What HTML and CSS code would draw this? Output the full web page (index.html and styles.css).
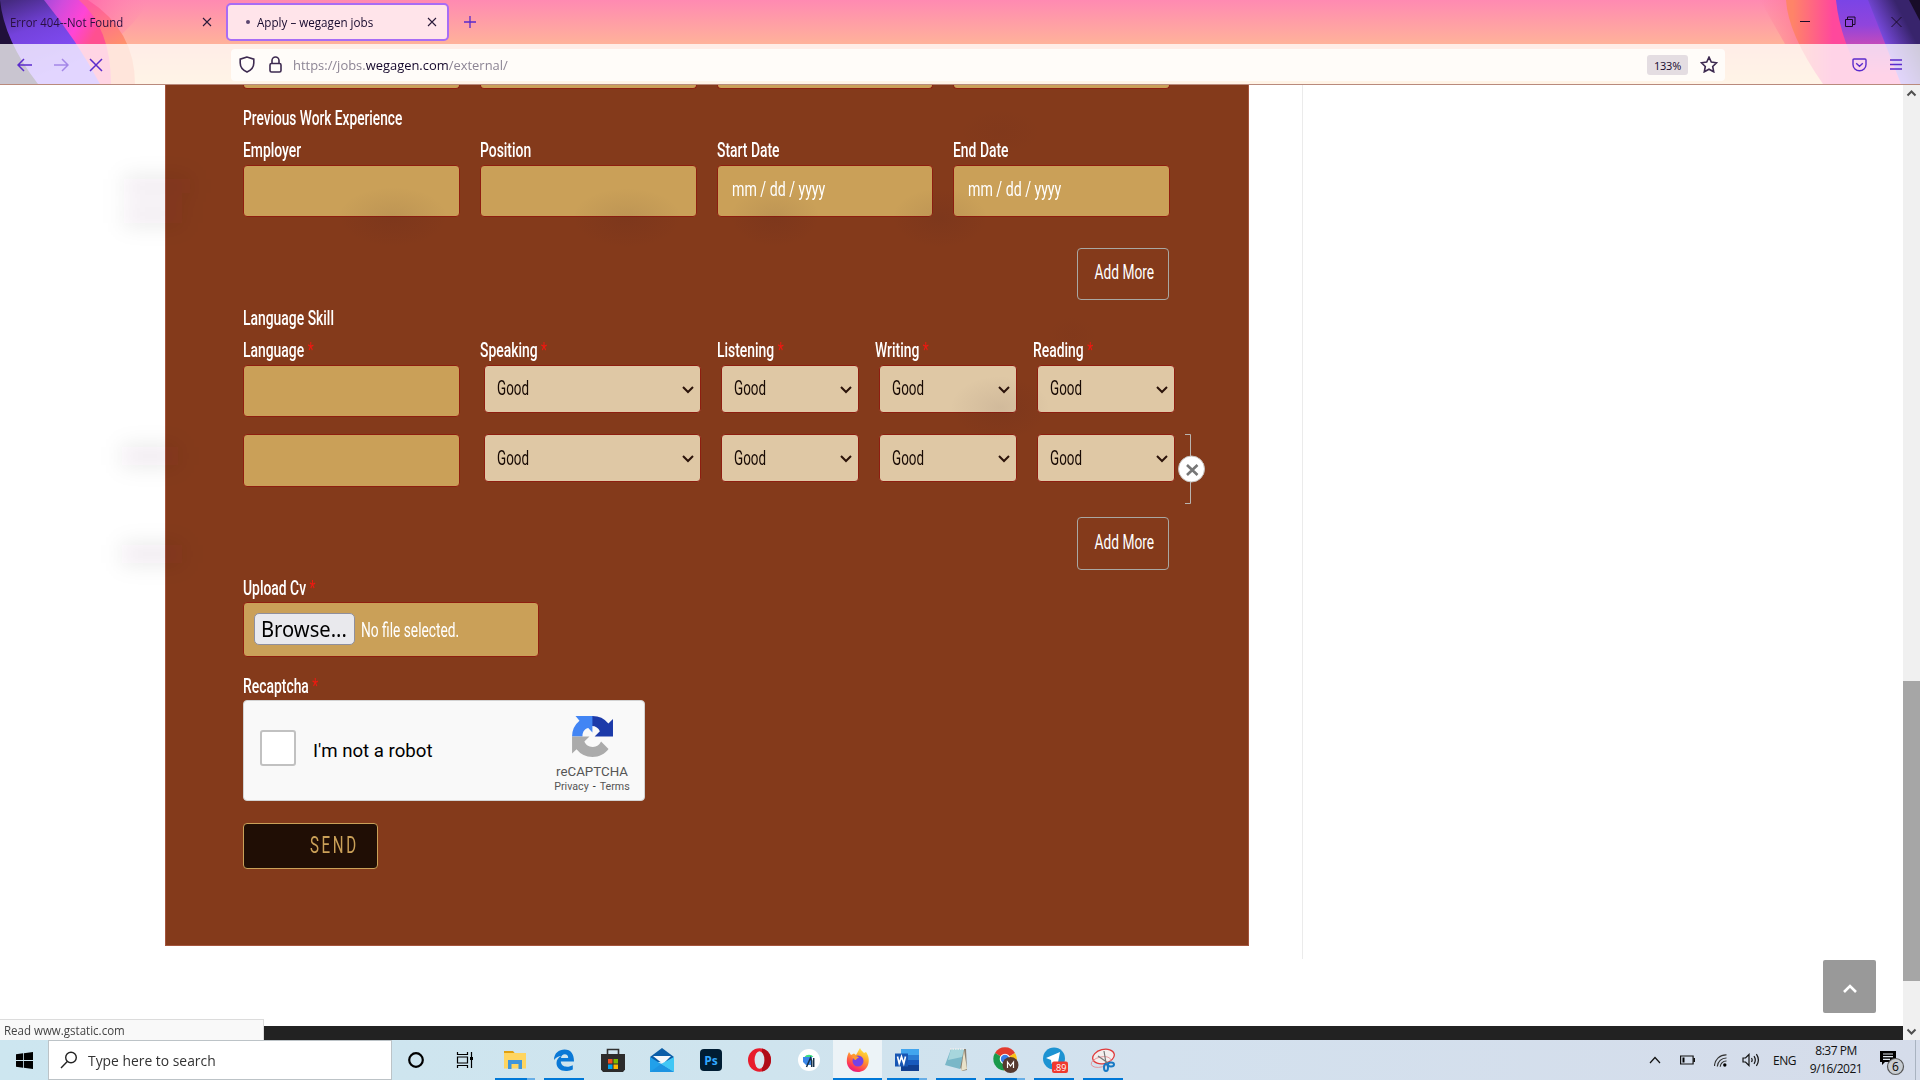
FILE: index.html
```html
<!DOCTYPE html>
<html lang="en">
<head>
<meta charset="utf-8">
<title>Apply – wegagen jobs</title>
<link rel="stylesheet" href="styles.css">
</head>
<body>
<div class="screen">
  <header class="browser">
    <svg class="theme" width="1920" height="84" viewBox="0 0 1920 84">
      <defs>
        <linearGradient id="sky" x1="0" y1="0" x2="0" y2="1"><stop offset="0" stop-color="#ff8ab2"/><stop offset=".5" stop-color="#ffb09b"/><stop offset="1" stop-color="#ffd29a"/></linearGradient>
        <linearGradient id="glowL" x1="0" x2="1"><stop offset=".55" stop-color="#ff62a8" stop-opacity=".8"/><stop offset="1" stop-color="#ff8ab2" stop-opacity="0"/></linearGradient>
        <linearGradient id="glowR" x1="0" x2="1"><stop offset="0" stop-color="#ff7a98" stop-opacity="0"/><stop offset="1" stop-color="#ff7a98" stop-opacity=".8"/></linearGradient>
        <linearGradient id="orL" x1=".5" x2="1" y1="0" y2=".6"><stop offset=".2" stop-color="#ff5c9e"/><stop offset=".9" stop-color="#ff9468"/></linearGradient>
        <linearGradient id="magL" x1=".2" x2=".9" y1="0" y2=".3"><stop offset="0" stop-color="#7a46d8"/><stop offset=".45" stop-color="#d04bdc"/><stop offset=".75" stop-color="#ff45d6"/><stop offset="1" stop-color="#ff5090"/></linearGradient>
        <linearGradient id="purL" x1=".1" x2=".5" y1="0" y2=".9"><stop offset="0" stop-color="#452a80"/><stop offset=".4" stop-color="#7442dc"/><stop offset="1" stop-color="#8650ff"/></linearGradient>
        <linearGradient id="orR" x1="0" x2="1"><stop offset=".05" stop-color="#ff8468"/><stop offset=".35" stop-color="#ff489c"/></linearGradient>
        <linearGradient id="purR" x1="0" x2="0" y1="0" y2="1"><stop offset="0" stop-color="#7a44e6"/><stop offset=".3" stop-color="#9045dc"/><stop offset=".55" stop-color="#c84ab8"/><stop offset=".9" stop-color="#ff4aa0"/></linearGradient>
        <linearGradient id="vioR" x1=".1" x2=".7" y1=".6" y2=".1"><stop offset=".15" stop-color="#8853fa"/><stop offset=".9" stop-color="#38246c"/></linearGradient>
      </defs>
      <rect width="1920" height="84" fill="url(#sky)"/>
      <path d="M0 0H150Q135 25 110 44H0Z" fill="url(#glowL)"/>
      <path d="M1760 0H1800V44H1785Z" fill="url(#glowR)"/>
      <path d="M0 0H88Q135 30 135 84H0Z" fill="url(#orL)"/>
      <path d="M0 0H79Q111 28 111 84H0Z" fill="url(#magL)"/>
      <path d="M0 0H44Q78 42 100 84H0Z" fill="url(#purL)"/>
      <path d="M0 0Q4 40 38 84H0Z" fill="#20103a"/>
      <path d="M1786 0Q1788 34 1823 84H1920V0Z" fill="url(#orR)"/>
      <path d="M1836 0Q1840 40 1865 84H1920V0Z" fill="url(#purR)"/>
      <path d="M1868 0L1901 84H1920V0Z" fill="url(#vioR)"/>
      <path d="M1909 0L1920 21V0Z" fill="#180c28"/>
    </svg>
    <div class="tabstrip">
      <div class="tab"><span class="tab-text t1">Error 404--Not Found</span>
        <svg class="x" width="10" height="10" viewBox="0 0 10 10"><path d="M1 1l8 8M9 1l-8 8"/></svg></div>
      <div class="tab active"><i class="dot"></i><span class="tab-text t2">Apply – wegagen jobs</span>
        <svg class="x" width="10" height="10" viewBox="0 0 10 10"><path d="M1 1l8 8M9 1l-8 8"/></svg></div>
      <svg class="plus" width="12" height="12" viewBox="0 0 12 12"><path d="M6 0v12M0 6h12"/></svg>
      <div class="winctl">
        <svg width="10" height="12" viewBox="0 0 10 12"><path d="M0 5.500h10"/></svg>
        <svg width="11" height="12" viewBox="0 0 11 12"><path d="M.5 3.500h7v7h-7zM2.500 3.500v-2.500h7.500v7.500h-2.500"/></svg>
        <svg width="11" height="12" viewBox="0 0 11 12"><path d="M.5 1l10 10M10.500 1l-10 10"/></svg>
      </div>
    </div>
    <div class="toolbar">
      <div class="nav">
        <svg width="16" height="14" viewBox="0 0 16 14"><path d="M15 7H1M7 1L1 7l6 6"/></svg>
        <svg class="dim" width="16" height="14" viewBox="0 0 16 14"><path d="M1 7h14M9 1l6 6-6 6"/></svg>
        <svg width="14" height="14" viewBox="0 0 14 14"><path d="M1 1l12 12M13 1L1 13"/></svg>
      </div>
      <div class="urlbar">
        <svg width="16" height="17" viewBox="0 0 16 17"><path d="M8 1L1.200 3.200V7c0 4 2.300 7 6.800 9 4.500-2 6.800-5 6.800-9V3.200z"/></svg>
        <svg width="13" height="17" viewBox="0 0 13 17"><rect x="1" y="7.500" width="11" height="8.500" rx="1.500"/><path d="M3 7.500V4.500a3.500 3.500 0 0 1 7 0v3"/></svg>
        <span class="url">https://jobs.<b>wegagen.com</b>/external/</span>
        <span class="zoom">133%</span>
        <svg class="star" width="18" height="17" viewBox="0 0 18 17"><path d="M9 1.200l2.300 4.900 5.300.700-3.900 3.700 1 5.300L9 13.200l-4.700 2.600 1-5.300L1.400 6.800l5.300-.7z"/></svg>
      </div>
      <div class="menu">
        <svg width="15" height="14" viewBox="0 0 15 14"><path d="M2 1h11q1 0 1 1v4.500a6.500 6.300 0 0 1-13 0V2q0-1 1-1zM4.200 5.200l3.300 3 3.300-3"/></svg>
        <svg width="12" height="12" viewBox="0 0 12 12"><path d="M0 1h12M0 5.500h12M0 10h12"/></svg>
      </div>
    </div>
  </header>

  <main class="page">
    <div class="article">
      <form class="form">
        <div class="row remnants"><i></i><i></i><i></i><i></i></div>

        <div class="title"><span class="cond long">Previous Work Experience</span></div>
        <div class="row">
          <div class="col"><label><span class="cond">Employer</span></label><div class="field"></div></div>
          <div class="col"><label><span class="cond">Position</span></label><div class="field"></div></div>
          <div class="col"><label><span class="cond">Start Date</span></label><div class="field"><span class="date">mm / dd / yyyy</span></div></div>
          <div class="col"><label><span class="cond">End Date</span></label><div class="field"><span class="date">mm / dd / yyyy</span></div></div>
        </div>
        <div class="addmore"><span>Add More</span></div>

        <div class="title"><span class="cond">Language Skill</span></div>
        <div class="row lang">
          <div class="col"><label><span class="cond">Language <em>*</em></span></label><div class="field"></div></div>
          <div class="col"><label><span class="cond">Speaking <em>*</em></span></label><div class="select"><span>Good</span><svg width="12" height="8" viewBox="0 0 12 8"><path d="M1 1l5 5 5-5"/></svg></div></div>
          <div class="col"><label><span class="cond">Listening <em>*</em></span></label><div class="select"><span>Good</span><svg width="12" height="8" viewBox="0 0 12 8"><path d="M1 1l5 5 5-5"/></svg></div></div>
          <div class="col"><label><span class="cond">Writing <em>*</em></span></label><div class="select"><span>Good</span><svg width="12" height="8" viewBox="0 0 12 8"><path d="M1 1l5 5 5-5"/></svg></div></div>
          <div class="col"><label><span class="cond">Reading <em>*</em></span></label><div class="select"><span>Good</span><svg width="12" height="8" viewBox="0 0 12 8"><path d="M1 1l5 5 5-5"/></svg></div></div>
        </div>
        <div class="row lang second">
          <div class="col"><div class="field"></div></div>
          <div class="col"><div class="select"><span>Good</span><svg width="12" height="8" viewBox="0 0 12 8"><path d="M1 1l5 5 5-5"/></svg></div></div>
          <div class="col"><div class="select"><span>Good</span><svg width="12" height="8" viewBox="0 0 12 8"><path d="M1 1l5 5 5-5"/></svg></div></div>
          <div class="col"><div class="select"><span>Good</span><svg width="12" height="8" viewBox="0 0 12 8"><path d="M1 1l5 5 5-5"/></svg></div></div>
          <div class="col"><div class="select"><span>Good</span><svg width="12" height="8" viewBox="0 0 12 8"><path d="M1 1l5 5 5-5"/></svg></div></div>
          <svg class="remove" width="28" height="72" viewBox="0 0 28 72"><path d="M7 1.500h5.500v69H7" fill="none" stroke="#b9b4b0"/><circle cx="13.500" cy="36" r="13" fill="#fff" stroke="#c4bfbb"/><path d="M9 32l10.500 10M19.500 32L9 42" stroke="#777" stroke-width="2.600"/></svg>
        </div>
        <div class="addmore lower"><span>Add More</span></div>

        <label class="single"><span class="cond">Upload Cv <em>*</em></span></label>
        <div class="upload"><span class="browse"><span>Browse...</span></span><span class="nofile">No file selected.</span></div>

        <label class="single cap"><span class="cond">Recaptcha <em>*</em></span></label>
        <div class="captcha">
          <i class="check"></i>
          <span class="robot">I'm not a robot</span>
          <div class="brand">
            <svg width="41" height="41" viewBox="0 0 64 64">
              <path fill="#1c3aa9" d="M64 31.950l-.020-1.370V4.600l-7.180 7.180A31.900 31.900 0 0 0 32.100.100 31.900 31.900 0 0 0 31 .120v15.300c6 0 10.400 3 12.500 8.300l-8.200 8.230z"/>
              <path fill="#4285f4" d="M31.860.070H5.500l6.200 7.200A31.900 31.900 0 0 0 .070 31.900h16.300c-.200-7.800 4.500-12.300 9-13l6.500 7z"/>
              <path fill="#ababab" d="M.100 32v26.500l7-6.600A31.900 31.900 0 0 0 32 64c10.500 0 19.500-4.800 25-12.500L45.400 39.800a15 15 0 0 1-12.700 8.400c-7 .100-11-3.200-13.400-8.400l8-7.800z"/>
            </svg>
            <span class="re">reCAPTCHA</span>
            <span class="pt">Privacy<b>-</b>Terms</span>
          </div>
        </div>
        <div class="send"><span>SEND</span></div>
        <svg class="smudges" width="1200" height="560" viewBox="90 85 1200 560">
          <defs>
            <radialGradient id="sm"><stop offset="0" stop-color="#301828" stop-opacity=".08"/><stop offset=".5" stop-color="#301828" stop-opacity=".04"/><stop offset="1" stop-color="#301828" stop-opacity="0"/></radialGradient>
            <filter id="soft" x="-50%" y="-80%" width="200%" height="260%"><feGaussianBlur stdDeviation="11"/></filter>
          </defs>
          <g fill="#301828" fill-opacity=".09" filter="url(#soft)">
            <rect x="124" y="177" width="66" height="18"/><rect x="124" y="207" width="58" height="18"/>
            <rect x="122" y="446" width="56" height="20"/><rect x="122" y="544" width="60" height="20"/>
          </g>
          <g fill="url(#sm)">
            <ellipse cx="393" cy="217" rx="55" ry="30"/><ellipse cx="627" cy="218" rx="55" ry="30"/>
            <ellipse cx="775" cy="217" rx="45" ry="30"/><ellipse cx="940" cy="218" rx="48" ry="30"/>
            <ellipse cx="1000" cy="132" rx="42" ry="24" opacity=".4"/><ellipse cx="1000" cy="408" rx="50" ry="32"/>
            <ellipse cx="1072" cy="335" rx="26" ry="20" opacity=".3"/>
          </g>
        </svg>
      </form>
    </div>
    <div class="side"></div>
    <div class="scrollbar">
      <svg width="17" height="17" viewBox="0 0 17 17"><path d="M4.500 10.500L8.500 6.500l4 4"/></svg>
      <i></i>
      <svg width="17" height="17" viewBox="0 0 17 17"><path d="M4.500 6.500l4 4 4-4"/></svg>
    </div>
    <div class="totop"><svg width="16" height="10" viewBox="0 0 16 10"><path d="M2 8l6-6 6 6"/></svg></div>
    <div class="status"><span>Read www.gstatic.com</span></div>
  </main>

  <footer class="taskbar">
    <div class="start"><svg width="17" height="17" viewBox="0 0 17 17"><path d="M0 2.300L7 1.300v6.800H0zM7.800 1.200L17 0v8H7.800zM0 8.900h7v6.800l-7-1zM7.800 8.900H17V17l-9.200-1.300z"/></svg></div>
    <div class="search"><svg width="18" height="18" viewBox="0 0 18 18"><circle cx="11" cy="6.500" r="5.300"/><path d="M7.300 10.500L1 17"/></svg><span>Type here to search</span></div>
    <div class="apps">
      <div class="app"><svg width="18" height="18" viewBox="0 0 18 18"><circle cx="9" cy="9" r="6.800" fill="none" stroke="#000" stroke-width="2.200"/></svg></div>
      <div class="app"><svg width="18" height="18" viewBox="0 0 18 18" fill="none" stroke="#000" stroke-width="1.200"><path d="M1.500 1v2.500h10V1M1.500 17v-2.500h10V17M1.500 6h10v6h-10zM15.500 1v16"/><path d="M14 6h3v3h-3z" fill="#000" stroke="none"/></svg></div>
      <div class="app open stack"><svg width="22" height="20" viewBox="0 0 22 20"><path d="M0 1h9l2 2.500H0z" fill="#e0a010"/><path d="M0 3h22v15.500H0z" fill="#ffd560"/><path d="M4 19v-9h14v9h-3.500v-5h-7v5z" fill="#3f95dc"/></svg></div>
      <div class="app open"><svg width="22" height="22" viewBox="0 0 22 22"><path d="M1 11C1 4 6 .500 11.500.500 18 .500 21 5 21 12.500H7.800c.2 3.500 3 5.200 6.200 5.200 2.300 0 4.200-.6 5.800-1.500v4.300A14 14 0 0 1 13 22C7 22 3.500 18.500 3.500 14c0-3 1.700-5.600 4.700-7C6 7 3 8.200 1 11zM8 9h7.200c0-2.400-1.300-3.700-3.400-3.700S8.300 6.600 8 9z" fill="#0a78d6"/></svg></div>
      <div class="app"><svg width="24" height="24" viewBox="0 0 24 24"><path d="M6.500 7V1.500h11V7" fill="none" stroke="#303030" stroke-width="1.600"/><path d="M0 6h24v15.500l-2 2.500H2l-2-2.500z" fill="#2c2c2c"/><path d="M7 11h4.500v4.500H7z" fill="#f25022"/><path d="M12.500 11H17v4.500h-4.500z" fill="#7fba00"/><path d="M7 16.500h4.500V21H7z" fill="#00a4ef"/><path d="M12.500 16.500H17V21h-4.500z" fill="#ffb900"/></svg></div>
      <div class="app"><svg width="24" height="24" viewBox="0 0 24 24"><path d="M0 9L12 0l12 9-5 5H5z" fill="#0b5ea8"/><path d="M3 8h18l-8 8z" fill="#f4f8fb"/><path d="M0 9l24 15H0z" fill="#21a0ea"/><path d="M24 9v15L11 16z" fill="#41c7f5"/><path d="M0 24l11-8 13 8z" fill="#1d94e2"/></svg></div>
      <div class="app"><svg width="22" height="22" viewBox="0 0 22 22"><rect width="22" height="22" rx="4" fill="#001d33"/><text x="11" y="15.500" text-anchor="middle" class="ps">Ps</text></svg></div>
      <div class="app"><svg width="23" height="24" viewBox="0 0 23 24"><ellipse cx="11.500" cy="12" rx="11.500" ry="11.700" fill="#e81c2c"/><path d="M14 .5c12 2 12 21 0 23z" fill="#b00d18"/><ellipse cx="11.500" cy="12" rx="4.900" ry="8.800" fill="#d6e7ef"/></svg></div>
      <div class="app"><svg width="22" height="22" viewBox="0 0 22 22"><circle cx="11" cy="11" r="11" fill="#fff"/><path d="M6.500 8a5 4 0 0 1 9 0z" fill="#3ddc84"/><path d="M5 8h9v8H8L5 13z" fill="#3a86e8"/><path d="M8.500 18l4-9 1.200 3v6M15.700 9v9" fill="none" stroke="#15304a" stroke-width="1.500"/></svg></div>
      <div class="app open current"><svg width="24" height="24" viewBox="0 0 24 24"><defs><linearGradient id="ff" x1=".8" y1="0" x2=".3" y2="1"><stop offset="0" stop-color="#fff044"/><stop offset=".4" stop-color="#ffa22c"/><stop offset=".8" stop-color="#ff3a55"/><stop offset="1" stop-color="#e31587"/></linearGradient></defs><path d="M3 4l2 3 3-1.500L10 7l4-7c1 3 3 3.500 4 5l2-1c3 4 3.500 9 2 13-2 5-6 7-10 7C5 24 .8 19 .8 13 .8 9 2 6 3 4z" fill="url(#ff)"/><circle cx="12" cy="13" r="5.500" fill="#7542e5"/><path d="M6 9c3-2 6-1 7 1-3 0-2 2-4 2z" fill="#ff9a30"/></svg></div>
      <div class="app open stack"><svg width="24" height="24" viewBox="0 0 24 24"><path d="M6 1h18v6H6z" fill="#41a5ee"/><path d="M6 7h18v5H6z" fill="#2b7cd3"/><path d="M6 12h18v5H6z" fill="#185abd"/><path d="M6 17h18v6H6z" fill="#103f91"/><path d="M0 5.500h13v13H0z" fill="#1756b4"/><path d="M2.500 8.500l1.700 7 2.300-7 2.300 7 1.700-7" fill="none" stroke="#fff" stroke-width="1.600"/></svg></div>
      <div class="app open"><svg width="24" height="24" viewBox="0 0 24 24"><path d="M6 1h16l1 21-5 1z" fill="#8b8171"/><path d="M7 1h13l-4 20-15-4z" fill="#79b7c8"/><path d="M7 1h13l-2 8L4 12z" fill="#a7d6dd"/><path d="M20 2l3 19-6 2z" fill="#e9e2c9"/><path d="M6 1h15" stroke="#eee" stroke-width="1.500" stroke-dasharray="1.500 1"/></svg></div>
      <div class="app open stack shift"><svg width="26" height="26" viewBox="0 0 26 26"><path d="M12 12L2 6A11.500 11.500 0 0 1 22 6z" fill="#e33b2e"/><path d="M12 12L2 6a11.500 11.500 0 0 0 9 17.500z" fill="#1a9a4b"/><path d="M12 12l10-6a11.500 11.500 0 0 1-11 17.500z" fill="#fbc116"/><circle cx="12" cy="12" r="5.300" fill="#fff"/><circle cx="12" cy="12" r="4.200" fill="#3b7de9"/><circle cx="17.500" cy="18" r="8" fill="#56392f"/><path d="M14.500 21v-6l3 4 3-4v6" fill="none" stroke="#fff" stroke-width="1.200"/></svg></div>
      <div class="app open shift"><svg width="26" height="26" viewBox="0 0 26 26"><circle cx="12" cy="11.500" r="11" fill="#1d93d2"/><path d="M4 11l14-6-2.500 13-4-3-2 2-.5-4z" fill="#fff"/><rect x="10" y="14.500" width="16" height="11.500" rx="2" fill="#f0392e"/><text x="18" y="24" text-anchor="middle" class="count">.89</text></svg></div>
      <div class="app open"><svg width="26" height="24" viewBox="0 0 26 24"><ellipse cx="13.500" cy="8.500" rx="11" ry="7" transform="rotate(-14 13.500 8.500)" fill="#f3eeee" stroke="#e03a3a" stroke-width="1.300"/><ellipse cx="11" cy="14" rx="10" ry="5" transform="rotate(-14 11 14)" fill="none" stroke="#e58a90" stroke-width=".8"/><path d="M14 3l2 12M8 8l10 7" stroke="#777" stroke-width="1.200"/><ellipse cx="16" cy="19.500" rx="2" ry="3.500" fill="none" stroke="#1779c4" stroke-width="2"/><ellipse cx="21" cy="16.500" rx="3" ry="2" fill="none" stroke="#1779c4" stroke-width="2"/></svg></div>
    </div>
    <div class="tray">
      <svg width="12" height="8" viewBox="0 0 12 8"><path d="M1 7l5-5.500L11 7"/></svg>
      <svg width="15" height="10" viewBox="0 0 15 10"><path d="M.6 1h12.500v8H.6zM14.400 3v4"/><path d="M2.500 2.500h2v5h-2z" fill="#000" stroke="none"/></svg>
      <svg width="13" height="13" viewBox="0 0 13 13"><path d="M.5 12A11.500 11.500 0 0 1 12.500.8M3.300 12.500A9 9 0 0 1 12.500 4M6.200 12.800A6 6 0 0 1 12.500 7" stroke="#333"/><circle cx="10.800" cy="11" r="1.700" fill="#000" stroke="none"/></svg>
      <svg width="18" height="14" viewBox="0 0 18 14"><path d="M1 5h2.500L7 1.500v11L3.500 9H1zM9.500 5q1.300 2 0 4M12 3.200q2.600 3.800 0 7.600M14.400 1.200q4 5.800 0 11.600"/></svg>
      <span class="lang-id">ENG</span>
      <div class="clock"><span>8:37 PM</span><span>9/16/2021</span></div>
      <svg class="note" width="26" height="26" viewBox="0 0 26 26"><path d="M1 1h16v11H6l-3 3v-3H1z" fill="#000" stroke="none"/><path d="M4 4h10M4 6.700h10M4 9.400h7" stroke="#dfe6ee"/><circle cx="16.500" cy="16.500" r="8" fill="#c8cdd2" stroke="#555"/><text x="16.500" y="21" text-anchor="middle">6</text></svg>
      <i class="peek"></i>
    </div>
  </footer>
</div>
</body>
</html>
```
FILE: styles.css
```css
* { box-sizing: border-box; }
body { margin: 0; background: #fff; font-family: "Open Sans", "Noto Sans", sans-serif; }
svg { display: block; flex: none; }
i, em { font-style: normal; }
.screen { width: 1920px; height: 1080px; display: flex; flex-direction: column; overflow: hidden; }

/* browser chrome */
.browser { position: relative; height: 85px; border-bottom: 1px solid #b98a7c; }
.theme { position: absolute; left: 0; top: 0; }
.tabstrip { position: relative; height: 44px; display: flex; align-items: center; }
.tab { width: 221px; height: 38px; display: flex; align-items: center; justify-content: space-between; padding: 0 9px 0 10px; font-size: 12px; color: #2a1040; }
.tab-text { white-space: nowrap; transform-origin: left; }
.t1 { transform: scaleX(.95); }
.t2 { transform: scaleX(.97); }
.tab.active { margin-left: 5px; width: 223px; border: 2px solid #a86cf5; border-radius: 5px; background: #ffe4ea; padding: 0 10px 0 18px; color: #15082c; }
.dot { width: 4px; height: 4px; border-radius: 50%; background: #5b4670; margin-right: 7px; }
.tab.active .tab-text { flex: 1; }
.x { fill: none; stroke: #2a1a3a; stroke-width: 1.1; }
.plus { margin-left: 15px; fill: none; stroke: #592acb; stroke-width: 1.3; }
.winctl { margin-left: auto; margin-right: 18px; display: flex; gap: 35px; fill: none; stroke: #1a0a28; }
.toolbar { position: relative; height: 40px; display: flex; align-items: center; background: rgba(255,255,255,.76); padding-top: 1px; }
.nav { width: 231px; display: flex; gap: 20px; padding-left: 17px; fill: none; stroke: #5b2bcc; stroke-width: 1.5; }
.nav .dim { opacity: .45; }
.urlbar { width: 1494px; height: 32px; display: flex; align-items: center; padding: 0 7px 0 8px; background: #fffcf9; border-radius: 4px; fill: none; stroke: #3d2a50; stroke-width: 1.6; }
.urlbar svg + svg { margin-left: 14px; }
.url { margin-left: 11px; font-size: 13px; color: #8c8494; white-space: nowrap; transform-origin: left; transform: scaleX(.995); }
.url b { font-weight: 400; color: #15082c; }
.zoom { margin-left: auto; width: 41px; height: 20px; border-radius: 3px; background: #e4dde2; font-size: 11px; line-height: 21px; text-align: center; color: #15082c; letter-spacing: -.2px; }
.urlbar .star { margin-left: 12px; }
.menu { margin-left: auto; display: flex; align-items: center; gap: 23px; margin-right: 18px; fill: none; stroke: #5b2bcc; stroke-width: 1.4; }

/* page */
.page { position: relative; height: 955px; display: flex; background: linear-gradient(#fff 941px, #222 941px); }
.article { width: 1303px; height: 874px; border-right: 1px solid #ebebeb; padding-left: 165px; }
.form { position: relative; width: 1084px; height: 861px; padding: 0 78px 0 77px; background: #843a1b; border: solid #a4543c; border-width: 0 1px 1px; font-family: Roboto, "Liberation Sans", sans-serif; font-size: 21px; color: #fff; }
.row { display: flex; gap: 20px; }
.remnants { height: 4px; }
.remnants i { width: 217px; height: 4px; background: #caa058; border: 1px solid #8e1e10; border-top: 0; border-radius: 0 0 4px 4px; }
.title { margin-top: 13px; height: 32px; line-height: 32px; }
.cond { display: inline-block; white-space: nowrap; font-weight: 500; transform: scaleX(.662); transform-origin: left; }
.long { transform: scaleX(.652); }
label { display: block; height: 31px; line-height: 32px; width: 0; }
em { color: #f01810; font-weight: 400; }
.col { width: 217px; }
.field { height: 52px; background: #caa058; border: 1px solid #8e1e10; border-radius: 4px; padding-left: 14px; line-height: 47px; }
.date { display: inline-block; white-space: nowrap; transform: scaleX(.69); transform-origin: left; font-size: 20.500px; }
.addmore { margin: 31px 0 0 834px; width: 92px; height: 52px; border: 1px solid #a9a7a3; border-radius: 4px; line-height: 47px; font-size: 21px; }
.addmore span { display: block; width: 90px; padding-left: 16px; white-space: nowrap; }
.addmore span, .select span, .nofile, .send span { transform-origin: left; }
.addmore span { transform: translateX(6px) scaleX(.655); }
.addmore + .title { margin-top: 2px; }
.lang { gap: 21px; }
.lang .col:first-child { margin-right: -1px; }
.lang .col:nth-child(2) { width: 216px; }
.lang .col:nth-child(n+3) { width: 137px; }
.select { margin-left: 4px; height: 48px; background: #dfc8a5; border: 1px solid #8e1e10; border-radius: 4px; display: flex; align-items: center; justify-content: space-between; padding: 0 6px 0 12px; color: #180a04; width: 217px; }
.lang .col:nth-child(n+3) .select { width: 138px; }
.select span { transform: scaleX(.64); line-height: 44px; height: 46px; }
.select svg { fill: none; stroke: #2b130a; stroke-width: 2; margin-top: 2px; }
.second { position: relative; margin-top: 17px; height: 52px; }
.second .field { height: 53px; }
.second .select span { line-height: 46px; }
.remove { position: absolute; left: 935px; top: -1px; }
.lower { height: 53px; line-height: 49px; }
.single { margin-top: 3px; height: 29px; line-height: 31px; }
.upload { width: 296px; height: 55px; background: #caa058; border: 1px solid #8e1e10; border-radius: 4px; display: flex; align-items: center; padding-left: 10px; }
.browse { width: 101px; height: 32px; margin-top: -1px; border: 1px solid #8f8f9d; border-radius: 5px; background: #e9e9ed; color: #000; font: 21px/31px "Noto Sans", sans-serif; padding-left: 6px; }
.browse span { display: inline-block; transform: scaleX(.96); transform-origin: left; }
.nofile { margin-left: 6px; white-space: nowrap; transform: scaleX(.655); }
.cap { margin-top: 14px; }
.captcha { width: 402px; height: 101px; background: #f9f9f9; border: 1px solid #d3d3d3; border-radius: 4px; display: flex; align-items: center; padding: 0 14px 0 16px; }
.check { width: 36px; height: 36px; margin-top: -5px; border: 2px solid #c1c1c1; border-radius: 3px; background: #fff; }
.robot { margin-left: 17px; color: #000; font-size: 18.670px; }
.brand { margin-left: auto; display: flex; flex-direction: column; align-items: center; width: 76px; color: #555; height: 84px; padding-top: 7px; }
.re { font-size: 13.300px; line-height: 15px; margin-top: 7px; }
.pt { font-size: 10.700px; line-height: 15px; }
.pt b { font-weight: 400; margin: 0 4px; color: #222; }
.send { margin-top: 22px; width: 135px; height: 46px; border: 1px solid #caa058; border-radius: 4px; background: #200e05; color: #caa058; padding-left: 66px; font-size: 24px; line-height: 42px; letter-spacing: 4.200px; }
.send span { display: inline-block; transform: scaleX(.63); }
.smudges { position: absolute; left: -76px; top: 0; pointer-events: none; }

.side { flex: 1; }
.scrollbar { width: 17px; background: #f0f0f0; display: flex; flex-direction: column; fill: none; stroke: #505050; stroke-width: 2; }
.scrollbar i { height: 300px; background: #a6a6a6; margin-top: 579px; margin-bottom: auto; }
.totop { position: absolute; left: 1823px; top: 875px; width: 53px; height: 53px; border-radius: 2px; background: #999; display: flex; align-items: center; justify-content: center; padding-top: 5px; }
.totop svg { fill: none; stroke: #fff; stroke-width: 2.6; }
.status { position: absolute; left: 0; top: 934px; width: 264px; height: 21px; background: #f9f9f9; border: solid #dcdcdc; border-width: 1px 1px 0 0; font-size: 12px; line-height: 22px; padding-left: 4px; color: #444; }
.status span { display: inline-block; white-space: nowrap; transform-origin: left; transform: scaleX(.96); }

/* taskbar */
.taskbar { height: 40px; display: flex; background: linear-gradient(90deg, #cde6f0, #cfe4ee 40%, #d3e1ee 60%, #d5dcea); }
.start { width: 48px; display: flex; align-items: center; justify-content: center; }
.search { width: 344px; border: 1px solid #bcc3c7; background: #fff; display: flex; align-items: center; padding-left: 11px; fill: none; stroke: #222; stroke-width: 1.4; }
.search span { margin-left: 10px; font-size: 15px; color: #333; white-space: nowrap; transform-origin: left; transform: scaleX(.925); }
.apps { display: flex; }
.app { position: relative; width: 49px; height: 40px; display: flex; align-items: center; justify-content: center; }
.app:nth-child(-n+2) { padding-right: 2px; }
.shift { padding-left: 2px; }
.open::after { content: ""; position: absolute; left: 5px; bottom: 0; width: 40px; height: 2px; background: #0078d7; }
.stack::after { background: linear-gradient(90deg, #0078d7 32px, #68aee6 32px); }
.current { background: #ecf3f7; }
.current::after { left: 0; width: 49px; }
.ps { font: bold 12px "Open Sans", sans-serif; fill: #31a8ff; }
.count { font: 9px "Open Sans", sans-serif; fill: #fff; }
.tray { margin-left: auto; display: flex; align-items: center; fill: none; stroke: #111; stroke-width: 1.2; font-size: 12px; color: #111; }
.tray svg:nth-child(2) { margin-left: 19px; }
.tray svg:nth-child(3) { margin-left: 19px; }
.tray svg:nth-child(4) { margin-left: 15px; }
.lang-id { width: 24px; margin-left: 13px; letter-spacing: -.5px; }
.clock { width: 54px; margin-left: 12px; display: flex; flex-direction: column; align-items: center; line-height: 18px; letter-spacing: -.5px; white-space: nowrap; }
.tray .note { margin-left: 16px; margin-top: 5px; }
.note text { font: 12px "Open Sans", sans-serif; fill: #000; stroke: none; }
.peek { width: 1px; height: 40px; background: #a9b3c0; margin: 0 4px 0 10px; }
```
